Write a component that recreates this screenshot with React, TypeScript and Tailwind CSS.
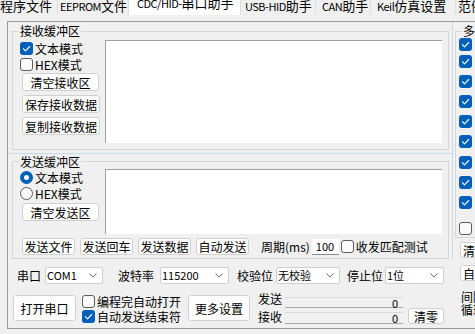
import React from "react"

// tab strip at the top of the window, clipped by the screen edge
const tabs = [
  { label: "程序文件", cls: "w-[58px] pl-0" },
  { label: "EEPROM文件", cls: "w-[71px] pl-[2px]" },
  { label: "CDC/HID-串口助手", cls: "w-[112px] pl-[8px] bg-white", active: true },
  { label: "USB-HID助手", cls: "w-[75px] pl-[4px]" },
  { label: "CAN助手", cls: "w-[55px] pl-[6px]" },
  { label: "Keil仿真设置", cls: "w-[85px] pl-[6px]" },
  { label: "范例程序", cls: "w-[80px] pl-[2px]" },
]

// gaps above each checkbox of the multi-string column
const multiRows = [
  { mt: "mt-0", checked: true },
  { mt: "mt-[4px]", checked: true },
  { mt: "mt-[7px]", checked: true },
  { mt: "mt-[7px]", checked: true },
  { mt: "mt-[7px]", checked: true },
  { mt: "mt-[7px]", checked: true },
  { mt: "mt-[8px]", checked: true },
  { mt: "mt-[7px]", checked: true },
  { mt: "mt-[7px]", checked: true },
  { mt: "mt-[13px]", checked: false },
]

function TabText({ text }: { text: string }) {
  const runs = text.match(/[\x20-\x7e]+|[^\x20-\x7e]+/g) ?? []
  return (
    <>
      {runs.map((r, i) =>
        /^[\x20-\x7e]+$/.test(r) ? (
          <span key={i} className="text-[11px] tracking-[-0.5px]">
            {r}
          </span>
        ) : (
          <span key={i}>{r}</span>
        ),
      )}
    </>
  )
}

const CheckMark = () => (
  <svg width="13" height="13" viewBox="0 0 13 13" className="block">
    <path
      d="M3.4 6.7 5.5 8.8 9.7 4.5"
      fill="none"
      stroke="#fff"
      strokeWidth="1.1"
      strokeLinecap="round"
      strokeLinejoin="round"
    />
  </svg>
)

function Check({ checked, label, className = "" }: { checked?: boolean; label?: string; className?: string }) {
  return (
    <div className={`flex items-center ${className}`}>
      {checked ? (
        <span className="flex h-[13px] w-[13px] shrink-0 items-center justify-center rounded-[3px] bg-[#005fb8]">
          <CheckMark />
        </span>
      ) : (
        <span className="h-[13px] w-[13px] shrink-0 rounded-[3px] border border-[#5d5d5d] bg-[#fbfbfb]" />
      )}
      {label && <span className="ml-[2px] whitespace-nowrap leading-[13px]">{label}</span>}
    </div>
  )
}

function Radio({ checked, label }: { checked?: boolean; label: string }) {
  return (
    <div className="flex h-[16px] items-center">
      {checked ? (
        <span className="flex h-[13px] w-[13px] shrink-0 items-center justify-center rounded-full bg-[#005fb8]">
          <span className="h-[5px] w-[5px] rounded-full bg-white" />
        </span>
      ) : (
        <span className="h-[13px] w-[13px] shrink-0 rounded-full border border-[#5d5d5d] bg-[#fbfbfb]" />
      )}
      <span className="ml-[2px] whitespace-nowrap leading-[13px]">{label}</span>
    </div>
  )
}

function Btn({ children, className = "" }: { children: React.ReactNode; className?: string }) {
  return (
    <button
      type="button"
      className={`flex shrink-0 items-center justify-center whitespace-nowrap rounded-[3px] border border-[#d0d0d0] bg-[#fdfdfd] text-[12px] leading-[13px] ${className}`}
    >
      {children}
    </button>
  )
}

function Select({ value, className = "" }: { value: string; className?: string }) {
  return (
    <div
      className={`flex h-[17px] shrink-0 items-center justify-between rounded-[2px] border border-[#cfcfcf] bg-white pl-[1px] pr-[5px] ${className}`}
    >
      <span className="text-[11px] leading-[13px]">{value}</span>
      <svg width="8" height="5" viewBox="0 0 8 5" className="block">
        <path d="M0.5 0.5 4 4 7.5 0.5" fill="none" stroke="#707070" strokeWidth="1" />
      </svg>
    </div>
  )
}

function Counter({ className = "" }: { className?: string }) {
  return (
    <div
      className={`flex w-[118px] items-center justify-end border-t border-b border-t-[#dadada] border-b-[#a9a9a9] pr-[5px] text-[11px] leading-[10px] ${className}`}
    >
      0
    </div>
  )
}

function Receive() {
  return (
    <fieldset className="ml-[4px] mt-[2px] h-[126px] w-[437px] border border-[#d6d6d6] pl-[7px] pr-[6px] pt-[2px]">
      <legend className="-ml-[1px] px-[1px] leading-[14px]">接收缓冲区</legend>
      <div className="flex">
        <div className="flex w-[85px] flex-col">
          <Check checked label="文本模式" className="h-[16px]" />
          <Check label="HEX模式" className="h-[16px]" />
          <Btn className="ml-[2px] mt-[1px] h-[18px] w-[77px]">清空接收区</Btn>
          <Btn className="ml-[2px] mt-[4px] h-[18px] w-[78px]">保存接收数据</Btn>
          <Btn className="ml-[2px] mt-[4px] h-[18px] w-[78px]">复制接收数据</Btn>
        </div>
        <div className="h-[103px] w-[337px] border-l border-t border-[#a0a0a0] bg-white" />
      </div>
    </fieldset>
  )
}

function Send() {
  return (
    <fieldset className="ml-[4px] mt-[1px] h-[104px] w-[437px] border border-[#d6d6d6] pl-[7px] pr-[6px] pt-[1px]">
      <legend className="-ml-[1px] px-[1px] leading-[13px]">发送缓冲区</legend>
      <div className="flex">
        <div className="flex w-[85px] flex-col">
          <Radio checked label="文本模式" />
          <Radio label="HEX模式" />
          <Btn className="ml-[2px] mt-[2px] h-[18px] w-[77px]">清空发送区</Btn>
        </div>
        <div className="h-[65px] w-[337px] border-l border-t border-[#a0a0a0] bg-white" />
      </div>
      <div className="mt-[4px] flex items-center">
        <Btn className="ml-[2px] h-[17px] w-[53px]">发送文件</Btn>
        <Btn className="ml-[5px] h-[17px] w-[53px]">发送回车</Btn>
        <Btn className="ml-[5px] h-[17px] w-[53px]">发送数据</Btn>
        <Btn className="ml-[5px] h-[17px] w-[53px]">自动发送</Btn>
        <span className="ml-[12px] whitespace-nowrap">周期(ms)</span>
        <div className="ml-[2px] h-[16px] w-[27px] border-b border-[#8a8a8a] bg-white pl-[4px] text-[11px] leading-[15px]">
          100
        </div>
        <Check label="收发匹配测试" className="ml-[2px] h-[16px]" />
      </div>
    </fieldset>
  )
}

function PortControls() {
  return (
    <div className="flex flex-col">
      <div className="mt-[8px] flex h-[17px] items-center">
        <span className="ml-[9px] w-[28px] shrink-0">串口</span>
        <Select value="COM1" className="w-[58px]" />
        <span className="ml-[15px] w-[42px] shrink-0">波特率</span>
        <Select value="115200" className="w-[69px]" />
        <span className="ml-[8px] w-[39px] shrink-0">校验位</span>
        <Select value="无校验" className="w-[64px]" />
        <span className="ml-[7px] w-[38px] shrink-0">停止位</span>
        <Select value="1位" className="w-[59px]" />
      </div>
      <div className="mt-[8px] flex items-start">
        <Btn className="ml-[5px] mt-[3px] h-[26px] w-[63px]">打开串口</Btn>
        <div className="ml-[6px] mt-[3px] flex w-[100px] flex-col">
          <Check label="编程完自动打开" className="h-[13px]" />
          <Check checked label="自动发送结束符" className="mt-px h-[14px]" />
        </div>
        <Btn className="ml-[6px] mt-[3px] h-[26px] w-[62px]">更多设置</Btn>
        <div className="ml-[8px] flex flex-col">
          <div className="flex h-[16px] items-end">
            <span className="w-[27px] shrink-0 self-start leading-[13px]">发送</span>
            <Counter className="h-[11px]" />
          </div>
          <div className="flex h-[16px] items-end">
            <span className="w-[27px] shrink-0 self-center leading-[13px]">接收</span>
            <Counter className="h-[12px]" />
            <Btn className="ml-[5px] h-[16px] w-[36px]">清零</Btn>
          </div>
        </div>
      </div>
    </div>
  )
}

function MultiSend() {
  return (
    <div className="flex w-[110px] shrink-0 flex-col">
      <fieldset className="ml-[2px] mt-[2px] h-[214px] w-[100px] border border-[#d6d6d6] pl-[3px]">
        <legend className="ml-[3px] whitespace-nowrap px-[1px] leading-[14px]">多条字符串发送</legend>
        {multiRows.map((r, i) => (
          <Check key={i} checked={r.checked} className={`h-[13px] ${r.mt}`} />
        ))}
      </fieldset>
      <Btn className="ml-[7px] mt-[4px] h-[16px] w-[54px]">清空全部</Btn>
      <Btn className="ml-[7px] mt-[7px] h-[16px] w-[78px]">自动循环发送</Btn>
      <div className="ml-[8px] mt-[9px] whitespace-nowrap leading-[13px]">间隔 0 ms</div>
      <div className="ml-[8px] whitespace-nowrap leading-[13px]">循环次数</div>
    </div>
  )
}

export default function App() {
  return (
    <div className="h-[334px] w-[475px] overflow-hidden bg-[#f0f0f0] font-['Noto_Sans_CJK_SC',sans-serif] text-[12px] leading-[14px] text-black">
      <div className="flex h-[21px] items-start">
        {tabs.map((t) => (
          <div
            key={t.label}
            className={`h-[15px] shrink-0 overflow-hidden whitespace-nowrap border-r border-[#dedede] text-[13px] leading-[13px] ${t.cls}`}
          >
            <div className={t.active ? "-mt-[4px]" : "-mt-[1px]"}>
              <TabText text={t.label} />
            </div>
          </div>
        ))}
      </div>

      <div className="ml-[7px] flex h-[308px] w-[560px] border-y border-l border-[#9a9a9a]">
        <div className="flex w-[445px] shrink-0 flex-col">
          <div className="flex h-[237px] flex-col border-r border-[#c4dcee]">
            <Receive />
            <div className="mt-[3px] h-px bg-[#c4dcee]" />
            <Send />
          </div>
          <PortControls />
        </div>
        <MultiSend />
      </div>
    </div>
  )
}
